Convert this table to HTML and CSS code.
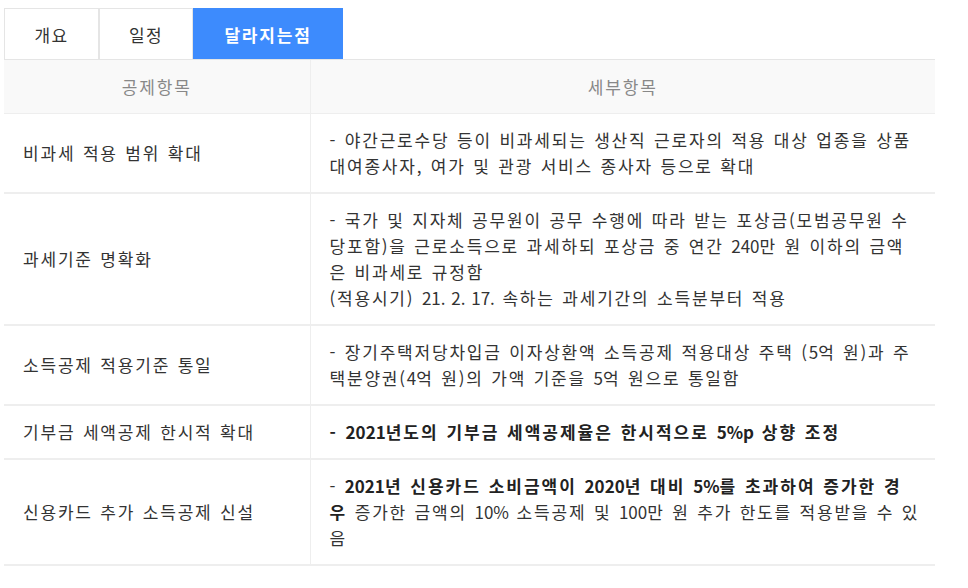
FILE: index.html
```html
<!DOCTYPE html>
<html lang="ko">
<head>
<meta charset="utf-8">
<link rel="stylesheet" href="styles.css">
</head>
<body>
<div class="wrap">
  <ul class="tabs">
    <li class="tab tab-1">개요</li>
    <li class="tab tab-2">일정</li>
    <li class="tab tab-3 active">달라지는점</li>
  </ul>
  <table class="info">
    <colgroup><col class="c1"><col class="c2"></colgroup>
    <thead>
      <tr><th>공제항목</th><th>세부항목</th></tr>
    </thead>
    <tbody>
      <tr>
        <td class="name">비과세 적용 범위 확대</td>
        <td class="desc">- 야간근로수당 등이 비과세되는 생산직 근로자의 적용 대상 업종을 상품<br>대여종사자, 여가 및 관광 서비스 종사자 등으로 확대</td>
      </tr>
      <tr>
        <td class="name">과세기준 명확화</td>
        <td class="desc">- 국가 및 지자체 공무원이 공무 수행에 따라 받는 포상금(모범공무원 수<br>당포함)을 근로소득으로 과세하되 포상금 중 연간 <span class="num">240</span>만 원 이하의 금액<br>은 비과세로 규정함<br>(적용시기) <span class="num">21. 2. 17.</span> 속하는 과세기간의 소득분부터 적용</td>
      </tr>
      <tr>
        <td class="name">소득공제 적용기준 통일</td>
        <td class="desc">- 장기주택저당차입금 이자상환액 소득공제 적용대상 주택 (<span class="num">5</span>억 원)과 주<br>택분양권(<span class="num">4</span>억 원)의 가액 기준을 <span class="num">5</span>억 원으로 통일함</td>
      </tr>
      <tr>
        <td class="name">기부금 세액공제 한시적 확대</td>
        <td class="desc"><strong>- <span class="num">2021</span>년도의 기부금 세액공제율은 한시적으로 <span class="num">5%p</span> 상향 조정</strong></td>
      </tr>
      <tr>
        <td class="name">신용카드 추가 소득공제 신설</td>
        <td class="desc">- <strong><span class="num">2021</span>년 신용카드 소비금액이 <span class="num">2020</span>년 대비 <span class="num">5%</span>를 초과하여 증가한 경<br>우</strong> 증가한 금액의 <span class="num">10%</span> 소득공제 및 <span class="num">100</span>만 원 추가 한도를 적용받을 수 있<br>음</td>
      </tr>
    </tbody>
  </table>
</div>
</body>
</html>
```

FILE: styles.css
```css
* { box-sizing: border-box; }
html, body { margin: 0; padding: 0; background: #fff; }
body {
  font-family: "Noto Sans CJK KR", "Noto Sans", sans-serif;
  color: #333;
}
.wrap {
  width: 935px;
  padding: 8px 0 0 4px;
}
.tabs {
  list-style: none;
  margin: 0;
  padding: 0;
  display: flex;
  height: 51px;
}
.tab {
  display: flex;
  align-items: center;
  justify-content: center;
  height: 51px;
  border: 1px solid #e5e5e5;
  border-bottom: none;
  font-size: 17px;
  letter-spacing: 1.3px;
  color: #333;
  background: #fff;
}
.tab-1 { width: 95px; }
.tab-2 { width: 94px; }
.tab-3 { width: 150px; }
.tab.active {
  background: #3d8bfd;
  border-color: #3d8bfd;
  color: #fff;
  font-weight: 700;
  letter-spacing: 1.8px;
}
.info {
  width: 931px;
  border-collapse: collapse;
  table-layout: fixed;
  font-size: 17px;
  line-height: 26px;
  letter-spacing: 1.8px;
  word-spacing: 1px;
}
.c1 { width: 306px; }
.c2 { width: 625px; }
.info th {
  background: #f9f9f9;
  color: #888;
  font-weight: 400;
  height: 54px;
  padding: 0;
  border-top: 1px solid #e5e5e5;
  border-bottom: 1px solid #eee;
  text-align: center;
}
.info th + th, .info td + td { border-left: 1px solid #eee; }
.info td {
  border-bottom: 2px solid #eee;
  padding: 13px 10px 13px 19px;
  vertical-align: middle;
  white-space: nowrap;
}
.info strong { font-weight: 700; color: #222; letter-spacing: 2px; }
.info .num { letter-spacing: 0; }
```
